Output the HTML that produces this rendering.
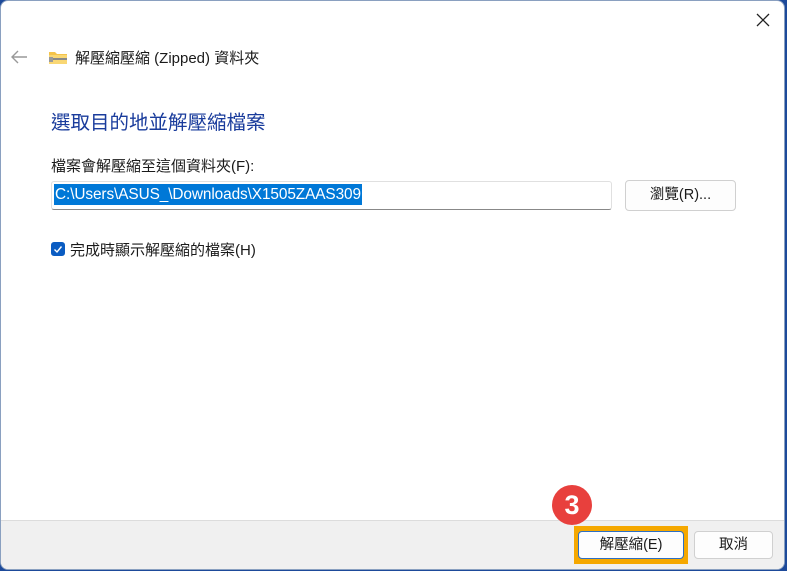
<!DOCTYPE html>
<html><head><meta charset="utf-8"><style>
body{margin:0;width:787px;height:571px;background:#1d4a9a;overflow:hidden;font-family:"Liberation Sans","Noto Sans CJK TC",sans-serif;color:#1a1a1a}
.win{position:absolute;left:0;top:0;width:785px;height:570px;background:#fff;border-radius:8px;border:1px solid #8aa0c0;box-sizing:border-box;overflow:hidden}
.foot{position:absolute;left:0;right:0;top:519px;bottom:0;background:#f0f0f0;border-top:1px solid #dcdcdc}
.t{position:absolute;white-space:nowrap}
.btn{position:absolute;background:#fdfdfd;border:1px solid #d0d0d0;border-radius:4px;box-sizing:border-box;font-size:14.5px;text-align:center}
</style></head><body>
<div class="win">
<svg class="t" style="left:754px;top:11px" width="16" height="16"><path d="M2 2L14 14M14 2L2 14" stroke="#222" stroke-width="1.3"/></svg>
<svg class="t" style="left:9px;top:48px" width="18" height="16"><path d="M17 8H2M8 2L2 8L8 14" stroke="#999" stroke-width="1.4" fill="none"/></svg>
<svg class="t" style="left:47px;top:48px" width="20" height="16"><path d="M1 3h6l2 2h10v10H1z" fill="#f4c34a"/><rect x="1" y="6" width="18" height="9" fill="#f9d774"/><rect x="4" y="9" width="15" height="2" fill="#888"/><rect x="1" y="8" width="4" height="5" fill="#999"/></svg>
<div class="t" style="left:74px;top:46px;font-size:15px">解壓縮壓縮 (Zipped) 資料夾</div>
<div class="t" style="left:50px;top:105px;font-size:19.5px;color:#1a3c9c">選取目的地並解壓縮檔案</div>
<div class="t" style="left:50px;top:154px;font-size:15px">檔案會解壓縮至這個資料夾(F):</div>
<div style="position:absolute;left:50px;top:180px;width:561px;height:29px;border:1px solid #e0e0e0;border-bottom:1px solid #888;box-sizing:border-box;border-radius:3px"></div>
<div class="t" style="left:53px;top:183px;height:21px;line-height:21px;background:#0078d7;color:#fff;font-size:15.4px;padding:0 1px;letter-spacing:-0.1px">C:\Users\ASUS_\Downloads\X1505ZAAS309</div>
<div class="btn" style="left:624px;top:179px;width:111px;height:31px;line-height:29px">瀏覽(R)...</div>
<div style="position:absolute;left:50px;top:241px;width:14px;height:14px;background:#0a5cc2;border-radius:3px"><svg width="14" height="14" style="position:absolute;left:0;top:0"><path d="M3.5 7.5L6 10L10.5 4.5" stroke="#fff" stroke-width="1.4" fill="none"/></svg></div>
<div class="t" style="left:69px;top:238px;font-size:15px">完成時顯示解壓縮的檔案(H)</div>
<div class="foot"></div>
<div style="position:absolute;left:573px;top:525px;width:114px;height:38px;background:#f5a800"></div>
<div class="btn" style="left:577px;top:530px;width:106px;height:28px;line-height:26px;border:1px solid #2d6fc4">解壓縮(E)</div>
<div class="btn" style="left:693px;top:530px;width:79px;height:28px;line-height:26px">取消</div>
<div style="position:absolute;left:551px;top:484px;width:40px;height:40px;border-radius:50%;background:#e8403d;color:#fff;font-size:27px;line-height:40px;text-align:center;font-weight:bold">3</div>
</div>
</body></html>
